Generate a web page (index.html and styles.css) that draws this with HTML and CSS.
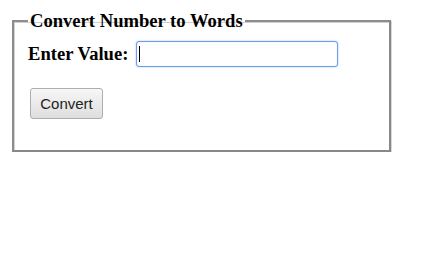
FILE: index.html
```html
<!DOCTYPE html>
<html>
<head>
<meta charset="utf-8">
<link rel="stylesheet" href="styles.css">
</head>
<body>
<fieldset class="box">
  <legend class="title">Convert Number to Words</legend>
  <div class="row">
    <span class="label">Enter Value:</span>
    <span class="field"><span class="caret"></span></span>
  </div>
  <div class="actions">
    <button class="btn" type="button">Convert</button>
  </div>
</fieldset>
</body>
</html>
```
FILE: styles.css
```css
html, body {
  background: #ffffff;
}
body {
  margin: 8px;
  font-family: "Liberation Serif", "Times New Roman", serif;
  color: #000;
}
.box {
  box-sizing: border-box;
  width: 379px;
  height: 142px;
  margin: 2px 0 0 4px;
  padding: 0 14px;
  border: 2px solid #8c8c8c;
  border-right-color: #888;
  border-bottom-color: #888;
  box-shadow: inset 1px 1px 0 #d0d0d0, 1px 1px 0 #d8d8d8;
}
.title {
  font-size: 18.6px;
  font-weight: bold;
  padding: 0 2px;
  margin-left: 0;
}
.row {
  display: flex;
  align-items: center;
  gap: 8px;
  margin-top: 9px;
}
.label {
  font-size: 18.6px;
  font-weight: bold;
}
.field {
  box-sizing: border-box;
  width: 202px;
  height: 26px;
  border: 1px solid #6d9eeb;
  border-radius: 3px;
  box-shadow: 0 0 2px #9dbff5, inset 0 0 1px #b8d0f5;
  display: flex;
  align-items: center;
  padding-left: 2px;
  background: #fff;
}
.caret {
  display: block;
  width: 1px;
  height: 16px;
  background: #000;
}
.actions {
  margin-top: 21px;
}
.btn {
  box-sizing: border-box;
  width: 73px;
  height: 31px;
  margin-left: 2px;
  padding: 0;
  font-family: "Liberation Sans", Arial, sans-serif;
  font-size: 15px;
  color: #222;
  border: 1px solid #adadad;
  border-radius: 3px;
  background: linear-gradient(#f7f7f7, #dedede);
}
```
